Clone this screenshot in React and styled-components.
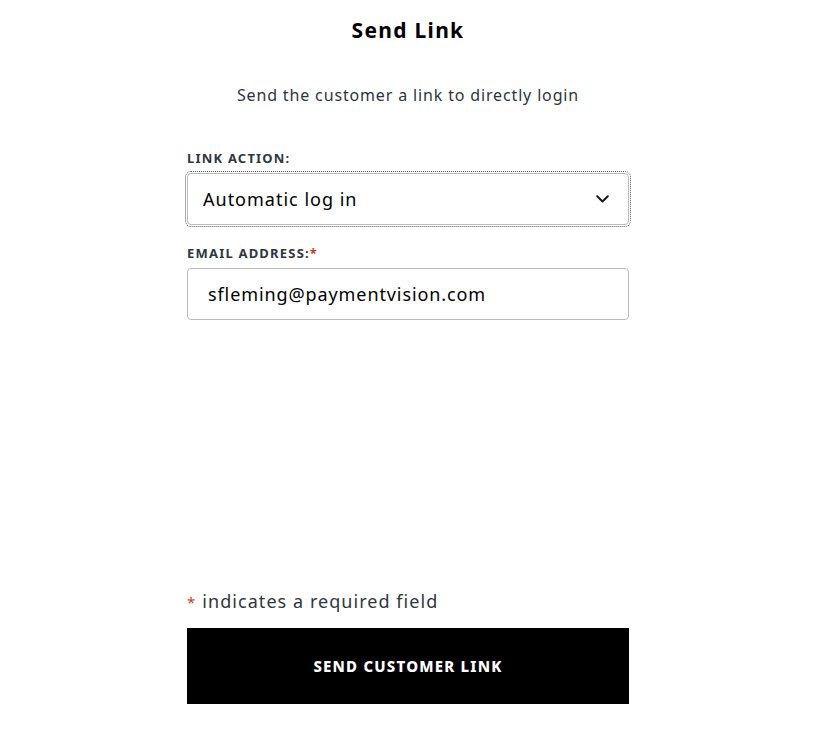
import React from "react";
import styled, { createGlobalStyle } from "styled-components";

const Global = createGlobalStyle`
  html, body { margin: 0; padding: 0; background: #fff; }
  body { font-family: "Noto Sans", "Open Sans", sans-serif; color: #000; }
`;

const Page = styled.div`
  width: 816px;
  display: flex;
  flex-direction: column;
  align-items: center;
`;

const Title = styled.h1`
  margin: 17px 0 0;
  font-size: 21px;
  line-height: 26px;
  font-weight: 700;
  letter-spacing: 1.3px;
`;

const Subtitle = styled.p`
  margin: 41px 0 0;
  font-size: 16px;
  line-height: 22px;
  color: #2e3440;
  letter-spacing: 0.85px;
`;

const Form = styled.form`
  width: 442px;
  display: flex;
  flex-direction: column;
  margin-top: 44px;
`;

const Label = styled.label`
  font-size: 13px;
  line-height: 16px;
  font-weight: 700;
  letter-spacing: 1.2px;
  color: #2f3640;
  margin-bottom: 7px;
  display: block;
`;

const Req = styled.span`
  color: #c8401c;
`;

const Field = styled.div`
  margin-bottom: ${(p) => p.$mb || 0}px;
`;

const SelectBox = styled.div`
  height: 50px;
  border: 1px solid #bbb;
  border-radius: 4px;
  display: flex;
  align-items: center;
  justify-content: space-between;
  padding: 0 19px 0 15px;
  font-size: 18px;
  outline: 1px dotted #555;
  outline-offset: 1px;
  letter-spacing: 1px;
`;

const InputBox = styled.div`
  height: 50px;
  border: 1px solid #bbb;
  border-radius: 4px;
  display: flex;
  align-items: center;
  padding: 0 20px;
  font-size: 18px;
  letter-spacing: 0.9px;
`;

const Note = styled.p`
  margin: 269px 0 0;
  font-size: 18px;
  line-height: 24px;
  color: #2f3640;
  letter-spacing: 1.05px;
`;

const NoteStar = styled.span`
  color: #c8401c;
  font-size: 15px;
  margin-right: 6px;
`;

const Button = styled.button`
  margin-top: 14px;
  height: 76px;
  width: 100%;
  border: none;
  background: #000;
  color: #fff;
  font-family: inherit;
  font-weight: 800;
  font-size: 15px;
  letter-spacing: 1.2px;
`;

const Chevron = () => (
  <svg width="13" height="8" viewBox="0 0 13 8" fill="none">
    <path d="M1.2 1.2L6.5 6.5L11.8 1.2" stroke="#1a1a1a" strokeWidth="2" strokeLinecap="round" strokeLinejoin="round" />
  </svg>
);

export default function App() {
  return (
    <Page>
      <Global />
      <Title>Send Link</Title>
      <Subtitle>Send the customer a link to directly login</Subtitle>
      <Form>
        <Field $mb={20}>
          <Label>LINK ACTION:</Label>
          <SelectBox>
            <span>Automatic log in</span>
            <Chevron />
          </SelectBox>
        </Field>
        <Field>
          <Label>
            EMAIL ADDRESS:<Req>*</Req>
          </Label>
          <InputBox>sfleming@paymentvision.com</InputBox>
        </Field>
        <Note>
          <NoteStar>*</NoteStar>indicates a required field
        </Note>
        <Button type="button">SEND CUSTOMER LINK</Button>
      </Form>
    </Page>
  );
}
